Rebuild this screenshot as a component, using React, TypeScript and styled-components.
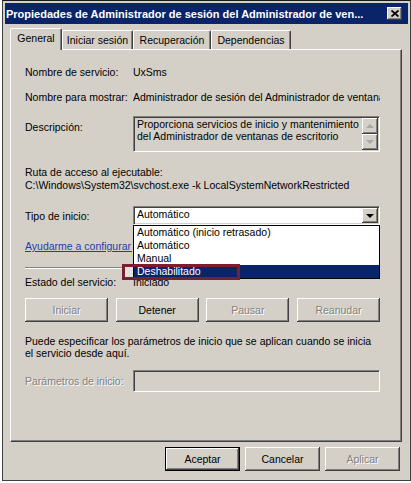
import React from 'react';
import styled, { createGlobalStyle } from 'styled-components';

const FACE = '#d4d0c8';
const SHADOW = '#808080';
const DARK = '#404040';
const NAVY = '#0a246a';

const GlobalStyle = createGlobalStyle`
    html, body {
        margin: 0;
        padding: 0;
        background: #ffffff;
    }
    body {
        font-family: "Liberation Sans", Arial, sans-serif;
        font-size: 10.5px;
        color: #000000;
    }
`;

const Window = styled.div`
    width: 409px;
    height: 481px;
    margin-left: 2px;
    box-sizing: border-box;
    border: 1px solid ${DARK};
    border-top-color: #1a1a1a;
    padding: 2px;
    background: ${FACE};
    display: flex;
    flex-direction: column;
`;

const TitleBar = styled.div`
    height: 21px;
    flex-shrink: 0;
    background: ${NAVY};
    display: flex;
    align-items: center;
    padding-left: 1px;
    color: #ffffff;
    font-weight: bold;
    font-size: 11px;
`;

const TitleText = styled.span`
    flex: 1;
    min-width: 0;
    white-space: nowrap;
    overflow: hidden;
`;

const CloseButton = styled.div`
    width: 15px;
    height: 13px;
    flex-shrink: 0;
    margin-right: 6px;
    background: ${FACE};
    box-shadow: inset -1px -1px ${DARK}, inset 1px 1px #ffffff,
        inset -2px -2px ${SHADOW};
    display: flex;
    align-items: center;
    justify-content: center;
`;

const Body = styled.div`
    padding: 4px 6px 0 5px;
    display: flex;
    flex-direction: column;
`;

const TabRow = styled.div`
    display: flex;
    align-items: flex-end;
    height: 21px;
    position: relative;
    z-index: 1;
`;

const Tab = styled.div<{ $width: number; $selected?: boolean }>`
    width: ${({ $width }): number => $width}px;
    height: ${({ $selected }): number => ($selected ? 22 : 19)}px;
    margin-bottom: ${({ $selected }): number => ($selected ? -1 : 0)}px;
    box-sizing: border-box;
    background: ${FACE};
    border-top: 1px solid #ffffff;
    border-left: 1px solid #ffffff;
    border-right: 1px solid ${DARK};
    border-radius: 2px 2px 0 0;
    box-shadow: inset -1px 0 ${SHADOW};
    display: flex;
    align-items: center;
    justify-content: center;
    padding-bottom: ${({ $selected }): number => ($selected ? 3 : 0)}px;
    white-space: nowrap;
`;

const Panel = styled.div`
    width: 392px;
    height: 393px;
    box-sizing: border-box;
    border-top: 1px solid #ffffff;
    border-left: 1px solid #ffffff;
    border-right: 1px solid ${DARK};
    border-bottom: 1px solid ${DARK};
    box-shadow: inset -1px -1px ${SHADOW};
    padding: 15px 21px 0 14px;
    display: flex;
    flex-direction: column;
`;

const Row = styled.div<{ $top: number; $height: number; $start?: boolean }>`
    display: flex;
    align-items: ${({ $start }): string => ($start ? 'flex-start' : 'center')};
    margin-top: ${({ $top }): number => $top}px;
    height: ${({ $height }): number => $height}px;
    flex-shrink: 0;
`;

const Label = styled.span<{ $disabled?: boolean; $pad?: number }>`
    width: 108px;
    flex-shrink: 0;
    white-space: nowrap;
    padding-top: ${({ $pad }): number => $pad || 0}px;
    color: ${({ $disabled }): string => ($disabled ? SHADOW : '#000000')};
    text-shadow: ${({ $disabled }): string =>
        $disabled ? '1px 1px #ffffff' : 'none'};
`;

const Value = styled.span`
    flex: 1;
    white-space: nowrap;
    overflow: hidden;
`;

const Sunken = styled.div<{ $bg: string; $height: number }>`
    flex: 1;
    height: ${({ $height }): number => $height}px;
    box-sizing: border-box;
    background: ${({ $bg }): string => $bg};
    border-top: 1px solid ${SHADOW};
    border-left: 1px solid ${SHADOW};
    border-right: 1px solid #ffffff;
    border-bottom: 1px solid #ffffff;
    box-shadow: inset 1px 1px ${DARK}, inset -1px -1px ${FACE};
    display: flex;
    position: relative;
`;

const DescText = styled.div`
    flex: 1;
    padding: 1px 0 0 3px;
    line-height: 12px;
    overflow: hidden;
`;

const ScrollColumn = styled.div`
    width: 16px;
    padding: 1px 1px 1px 0;
    display: flex;
    flex-direction: column;
`;

const ArrowButton = styled.div`
    width: 16px;
    height: 16px;
    box-sizing: border-box;
    background: ${FACE};
    box-shadow: inset -1px -1px ${DARK}, inset 1px 1px #ffffff,
        inset -2px -2px ${SHADOW};
    display: flex;
    align-items: center;
    justify-content: center;
`;

const Arrow = styled.span<{ $up?: boolean; $color: string }>`
    width: 0;
    height: 0;
    border-left: 4px solid transparent;
    border-right: 4px solid transparent;
    ${({ $up, $color }): string =>
        $up
            ? `border-bottom: 4px solid ${$color};`
            : `border-top: 4px solid ${$color};`}
`;

const PathBlock = styled.div`
    margin-top: 14px;
    line-height: 13px;
    white-space: nowrap;
`;

const ComboWrap = styled.div`
    flex: 1;
    position: relative;
`;

const ComboText = styled.span`
    flex: 1;
    padding-left: 3px;
    line-height: 15px;
`;

const ComboArrow = styled(ArrowButton)`
    height: 15px;
    margin: 1px 1px 0 0;
`;

const DropList = styled.div`
    position: absolute;
    top: 100%;
    left: 0;
    right: 0;
    border: 1px solid #000000;
    background: #ffffff;
    z-index: 2;
`;

const DropItem = styled.div<{ $selected?: boolean }>`
    height: 13px;
    line-height: 13px;
    padding-left: 3px;
    white-space: nowrap;
    background: ${({ $selected }): string => ($selected ? NAVY : '#ffffff')};
    color: ${({ $selected }): string => ($selected ? '#ffffff' : '#000000')};
`;

const Highlight = styled.div`
    position: absolute;
    top: 58px;
    left: -11px;
    width: 118px;
    height: 16px;
    box-sizing: border-box;
    border: 3px solid #7b1e30;
    background: linear-gradient(to right, #e4e2de 8px, transparent 8px);
    z-index: 3;
`;

const LinkClip = styled.div`
    width: 107px;
    overflow: hidden;
    white-space: nowrap;
`;

const Link = styled.span`
    color: #1c3fa8;
    text-decoration: underline;
`;

const Separator = styled.div`
    margin-top: 14px;
    border-top: 1px solid ${SHADOW};
    border-bottom: 1px solid #ffffff;
    flex-shrink: 0;
`;

const ButtonRow = styled.div`
    margin-top: 9px;
    display: flex;
    justify-content: space-between;
`;

const ClassicButton = styled.div<{
    $width: number;
    $height: number;
    $disabled?: boolean;
    $default?: boolean;
}>`
    width: ${({ $width }): number => $width}px;
    height: ${({ $height }): number => $height}px;
    box-sizing: border-box;
    background: ${FACE};
    border: ${({ $default }): string =>
        $default ? '1px solid #000000' : 'none'};
    box-shadow: inset -1px -1px ${DARK}, inset 1px 1px #ffffff,
        inset -2px -2px ${SHADOW};
    display: flex;
    align-items: center;
    justify-content: center;
    color: ${({ $disabled }): string => ($disabled ? SHADOW : '#000000')};
    text-shadow: ${({ $disabled }): string =>
        $disabled ? '1px 1px #ffffff' : 'none'};
`;

const Note = styled.div`
    margin-top: 13px;
    line-height: 12px;
`;

const Footer = styled.div`
    margin-top: 5px;
    padding-right: 2px;
    display: flex;
    justify-content: flex-end;
    gap: 5px;
`;

const CloseIcon: React.FC = () => (
    <svg width="8" height="7" viewBox="0 0 8 7">
        <path d="M0.5 0.5 L7.5 6.5 M7.5 0.5 L0.5 6.5" stroke="#000" strokeWidth="1.8" />
    </svg>
);

const App: React.FC = () => (
    <>
        <GlobalStyle />
        <Window>
            <TitleBar>
                <TitleText>
                    Propiedades de Administrador de sesión del Administrador de ven...
                </TitleText>
                <CloseButton>
                    <CloseIcon />
                </CloseButton>
            </TitleBar>
            <Body>
                <TabRow>
                    <Tab $width={52} $selected>
                        General
                    </Tab>
                    <Tab $width={71}>Iniciar sesión</Tab>
                    <Tab $width={78}>Recuperación</Tab>
                    <Tab $width={80}>Dependencias</Tab>
                </TabRow>
                <Panel>
                    <Row $top={0} $height={14}>
                        <Label>Nombre de servicio:</Label>
                        <Value>UxSms</Value>
                    </Row>
                    <Row $top={11} $height={14}>
                        <Label>Nombre para mostrar:</Label>
                        <Value>Administrador de sesión del Administrador de ventanas de escritorio</Value>
                    </Row>
                    <Row $top={12} $height={36} $start>
                        <Label $pad={5}>Descripción:</Label>
                        <Sunken $bg={FACE} $height={36}>
                            <DescText>
                                Proporciona servicios de inicio y mantenimiento
                                <br />
                                del Administrador de ventanas de escritorio
                            </DescText>
                            <ScrollColumn>
                                <ArrowButton>
                                    <Arrow $up $color="#a8a8a8" />
                                </ArrowButton>
                                <ArrowButton>
                                    <Arrow $color="#a8a8a8" />
                                </ArrowButton>
                            </ScrollColumn>
                        </Sunken>
                    </Row>
                    <PathBlock>
                        Ruta de acceso al ejecutable:
                        <br />
                        C:\Windows\System32\svchost.exe -k LocalSystemNetworkRestricted
                    </PathBlock>
                    <Row $top={14} $height={19}>
                        <Label>Tipo de inicio:</Label>
                        <ComboWrap>
                            <Sunken $bg="#ffffff" $height={19}>
                                <ComboText>Automático</ComboText>
                                <ComboArrow>
                                    <Arrow $color="#000000" />
                                </ComboArrow>
                            </Sunken>
                            <DropList>
                                <DropItem>Automático (inicio retrasado)</DropItem>
                                <DropItem>Automático</DropItem>
                                <DropItem>Manual</DropItem>
                                <DropItem $selected>Deshabilitado</DropItem>
                            </DropList>
                            <Highlight />
                        </ComboWrap>
                    </Row>
                    <Row $top={14} $height={14}>
                        <LinkClip>
                            <Link>Ayudarme a configurar las opciones de inicio.</Link>
                        </LinkClip>
                    </Row>
                    <Separator />
                    <Row $top={6} $height={14}>
                        <Label>Estado del servicio:</Label>
                        <Value>Iniciado</Value>
                    </Row>
                    <ButtonRow>
                        <ClassicButton $width={83} $height={24} $disabled>
                            Iniciar
                        </ClassicButton>
                        <ClassicButton $width={83} $height={24}>
                            Detener
                        </ClassicButton>
                        <ClassicButton $width={83} $height={24} $disabled>
                            Pausar
                        </ClassicButton>
                        <ClassicButton $width={83} $height={24} $disabled>
                            Reanudar
                        </ClassicButton>
                    </ButtonRow>
                    <Note>
                        Puede especificar los parámetros de inicio que se aplican cuando se inicia
                        <br />
                        el servicio desde aquí.
                    </Note>
                    <Row $top={11} $height={22}>
                        <Label $disabled>Parámetros de inicio:</Label>
                        <Sunken $bg={FACE} $height={22} />
                    </Row>
                </Panel>
                <Footer>
                    <ClassicButton $width={75} $height={24} $default>
                        Aceptar
                    </ClassicButton>
                    <ClassicButton $width={75} $height={24}>
                        Cancelar
                    </ClassicButton>
                    <ClassicButton $width={75} $height={24} $disabled>
                        Aplicar
                    </ClassicButton>
                </Footer>
            </Body>
        </Window>
    </>
);

export default App;
